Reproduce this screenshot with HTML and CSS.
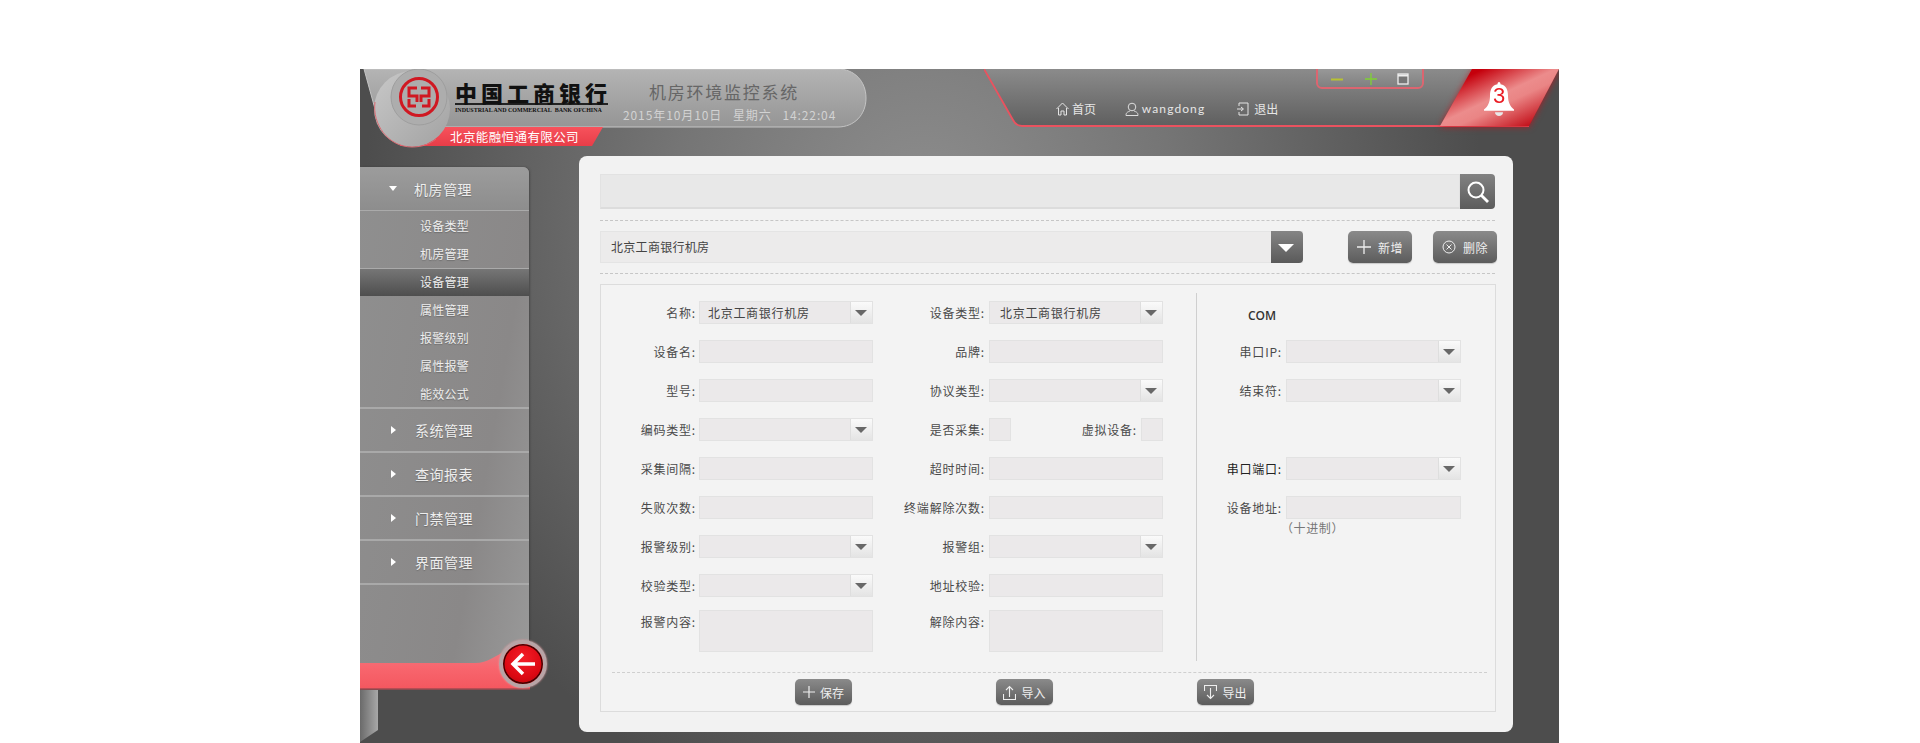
FILE: index.html
```html
<!DOCTYPE html>
<html lang="zh-CN">
<head>
<meta charset="utf-8">
<title>机房环境监控系统</title>
<link rel="stylesheet" href="styles.css">
</head>
<body>
<div class="stage">
  <header class="topbar">
    <div class="brand">
      <svg class="brand-art" width="520" height="87" viewBox="0 0 520 87">
        <defs>
          <linearGradient id="pill" x1="0" y1="0" x2="0" y2="1"><stop offset="0" stop-color="#b4b4b4"/><stop offset="1" stop-color="#959595"/></linearGradient>
          <linearGradient id="strip" x1="0" y1="0" x2="0" y2="1"><stop offset="0" stop-color="#f7525c"/><stop offset="1" stop-color="#e83d48"/></linearGradient>
          <linearGradient id="disc" x1="0" y1="0" x2="1" y2="1"><stop offset="0" stop-color="#c8c8c8"/><stop offset="1" stop-color="#a2a2a2"/></linearGradient>
        </defs>
        <path d="M4 0H478C494 0 506 12 506 29C506 46 494 58 478 58H20Z" fill="url(#pill)" stroke="#c4c4c4" stroke-width="1"/>
        <path d="M40 58H243L232 77H40Z" fill="url(#strip)"/>
        <circle cx="52" cy="40" r="38" fill="url(#disc)"/>
        <path d="M15 33C12 55 28 78 52 78C62 78 70 75 76 70" fill="none" stroke="#dc6a72" stroke-width="1"/>
        <circle cx="59" cy="28" r="28" fill="#adadad" stroke="#9e9e9e"/>
        <g fill="none" stroke="#d01822">
          <circle cx="59" cy="28" r="18.5" stroke-width="3"/>
          <path d="M57 19H49V27H57V33M49 30V37H56M61 19H69V27H61V33M69 30V37H62" stroke-width="3"/>
        </g>
      </svg>
      <div class="brand-row">
        <div class="bank">
          <div class="bank-cn">中国工商银行</div>
          <div class="bank-en">INDUSTRIAL AND COMMERCIAL&nbsp; BANK OFCHINA</div>
        </div>
        <div class="system">
          <div class="system-name">机房环境监控系统</div>
          <div class="system-date">2015年10月10日 &nbsp; 星期六 &nbsp; 14:22:04</div>
        </div>
      </div>
      <div class="company">北京能融恒通有限公司</div>
    </div>

    <nav class="topnav">
      <svg class="nav-art" width="545" height="58" viewBox="0 0 545 58">
        <defs><linearGradient id="navbg" x1="0" y1="0" x2="0" y2="1"><stop offset="0" stop-color="#8b8b8b"/><stop offset="1" stop-color="#5f5f5f"/></linearGradient></defs>
        <path d="M0 0H545V57H38C33 57 31 54 29 51Z" fill="url(#navbg)"/>
        <path d="M0 0L29 51C31 55 33 57 38 57H545" fill="none" stroke="#ea525f" stroke-width="1.8"/>
      </svg>
      <div class="winctl">
        <svg width="14" height="12" viewBox="0 0 14 12"><path d="M1 6.500H13" stroke="#b8c232" stroke-width="2"/></svg>
        <svg width="14" height="14" viewBox="0 0 14 14"><path d="M1 7H13M7 1V13" stroke="#7fd133" stroke-width="1.300"/></svg>
        <svg width="12" height="12" viewBox="0 0 12 12"><rect x="1" y="1" width="10" height="10" fill="#777" stroke="#eee" stroke-width="1.300"/><path d="M1 2.500H11" stroke="#eee" stroke-width="2"/></svg>
      </div>
      <div class="navlinks">
        <a class="navlink">
          <svg width="13" height="14" viewBox="0 0 13 14" fill="none" stroke="#e4e4e4"><path d="M.5 7L6.500 1L12.500 7M2.500 6V13H5V9H8V13H10.500V6"/></svg>首页</a>
        <a class="navlink navuser">
          <svg width="14" height="14" viewBox="0 0 14 14" fill="none" stroke="#ddd"><circle cx="7" cy="5" r="3.800"/><path d="M5 9C3 10 1 10 1 13.500H13C13 10 11 10 9 9"/></svg>wangdong</a>
        <a class="navlink navexit">
          <svg width="13" height="14" viewBox="0 0 13 14" fill="none" stroke="#e4e4e4"><path d="M3 4V1H12V13H3V10M1 7H7M5 5L7.500 7L5 9"/></svg>退出</a>
      </div>
    </nav>

    <div class="alarm">
      <div class="alarm-flag">
        <div class="bell">
          <svg width="32" height="36" viewBox="0 0 32 34" preserveAspectRatio="none"><path d="M16 1C17 1 17.500 2 17.500 3C23 4 25 8 25 14C25 20 27 24 31 27V28H1V27C5 24 7 20 7 14C7 8 9 4 14.500 3C14.500 2 15 1 16 1Z" fill="#fff"/><path d="M12 29.500H20C20 32 18 33 16 33C14 33 12 32 12 29.500Z" fill="#e8e8e8"/></svg>
          <span class="bell-num">3</span>
        </div>
      </div>
    </div>
  </header>

  <div class="body">
    <aside class="sidebar">
      <div class="side-panel">
        <div class="side-head"><i class="arrow-down"></i><span>机房管理</span></div>
        <ul class="sub">
          <li>设备类型</li>
          <li>机房管理</li>
          <li class="on">设备管理</li>
          <li>属性管理</li>
          <li>报警级别</li>
          <li>属性报警</li>
          <li>能效公式</li>
        </ul>
        <div class="side-head"><i class="arrow-right"></i><span>系统管理</span></div>
        <div class="side-head"><i class="arrow-right"></i><span>查询报表</span></div>
        <div class="side-head"><i class="arrow-right"></i><span>门禁管理</span></div>
        <div class="side-head"><i class="arrow-right"></i><span>界面管理</span></div>
      </div>
      <div class="side-foot">
        <svg class="foot-art" width="170" height="41" viewBox="0 0 170 41">
          <defs><linearGradient id="red" x1="0" y1="0" x2="0" y2="1"><stop offset="0" stop-color="#e97d84"/><stop offset=".45" stop-color="#f8666e"/><stop offset="1" stop-color="#f4575f"/></linearGradient></defs>
          <path d="M0 14H115C128 14 136 6 150 0H170V40H0Z" fill="url(#red)"/>
          <path d="M0 40H170" stroke="#a04a50" stroke-width="1.500"/>
        </svg>
        <button class="back">
          <svg width="26" height="24" viewBox="0 0 26 24" fill="none" stroke="#fff" stroke-width="3.500"><path d="M25 12H4M13 2L3 12L13 22"/></svg>
        </button>
      </div>
      <div class="side-tail"></div>
    </aside>

    <main class="content">
      <div class="search">
        <div class="search-input"></div>
        <button class="search-btn">
          <svg width="24" height="24" viewBox="0 0 24 24" fill="none" stroke="#fff" stroke-width="2"><circle cx="10" cy="10" r="7.500"/><path d="M15.500 15.500L22 22" stroke-width="2.800"/></svg>
        </button>
      </div>
      <div class="toolbar">
        <div class="room">
          <span class="room-text">北京工商银行机房</span>
          <span class="room-arrow"></span>
        </div>
        <button class="btn btn-lg btn-add">
          <svg width="14" height="14" viewBox="0 0 14 14" stroke="#eee" stroke-width="1.300"><path d="M0 7H14M7 0V14"/></svg>新增</button>
        <button class="btn btn-lg btn-del">
          <svg width="14" height="14" viewBox="0 0 14 14" fill="none" stroke="#eee"><circle cx="7" cy="7" r="6"/><path d="M4.500 4.500L9.500 9.500M9.500 4.500L4.500 9.500"/></svg>删除</button>
      </div>

      <section class="formbox">
        <div class="columns">
          <div class="col col-a">
            <label>名称:</label><div class="field select has-value">北京工商银行机房</div>
            <label>设备名:</label><div class="field"></div>
            <label>型号:</label><div class="field"></div>
            <label>编码类型:</label><div class="field select"></div>
            <label>采集间隔:</label><div class="field"></div>
            <label>失败次数:</label><div class="field"></div>
            <label>报警级别:</label><div class="field select"></div>
            <label>校验类型:</label><div class="field select"></div>
            <label class="raised">报警内容:</label><div class="field area"></div>
          </div>
          <div class="col col-b">
            <label>设备类型:</label><div class="field select has-value">北京工商银行机房</div>
            <label>品牌:</label><div class="field"></div>
            <label>协议类型:</label><div class="field select"></div>
            <label>是否采集:</label>
            <div class="checks">
              <div class="field check"></div>
              <label>虚拟设备:</label>
              <div class="field check"></div>
            </div>
            <label>超时时间:</label><div class="field"></div>
            <label>终端解除次数:</label><div class="field"></div>
            <label>报警组:</label><div class="field select"></div>
            <label>地址校验:</label><div class="field"></div>
            <label class="raised">解除内容:</label><div class="field area"></div>
          </div>
          <div class="col col-c">
            <div class="com">COM</div>
            <label>串口IP:</label><div class="field select"></div>
            <label>结束符:</label><div class="field select"></div>
            <div class="blank"></div>
            <label class="dark">串口端口:</label><div class="field select"></div>
            <label>设备地址:</label><div class="field"></div>
            <div class="note">（十进制）</div>
          </div>
        </div>
        <div class="actions">
          <button class="btn btn-sm">
            <svg width="12" height="12" viewBox="0 0 12 12" stroke="#eee" stroke-width="1.200"><path d="M0 6H12M6 0V12"/></svg>保存</button>
          <button class="btn btn-sm">
            <svg width="13" height="15" viewBox="0 0 13 15" fill="none" stroke="#eee" stroke-width="1.100"><path d="M0 14.500H13M0.500 9V14M12.500 9V14M6.500 12V1.500M3 5L6.500 1.500L10 5"/></svg>导入</button>
          <button class="btn btn-sm">
            <svg width="13" height="15" viewBox="0 0 13 15" fill="none" stroke="#eee" stroke-width="1.100"><path d="M0 .5H13M0.500 1V6M12.500 1V6M6.500 3V13.500M3 10L6.500 13.500L10 10"/></svg>导出</button>
        </div>
      </section>
    </main>
  </div>
</div>
</body>
</html>
```

FILE: styles.css
```css
* { box-sizing: border-box; }
html, body { margin: 0; padding: 0; background: #fff; height: 743px; overflow: hidden; }
body { font-family: "Noto Sans CJK SC", "Liberation Sans", sans-serif; font-size: 12px; color: #444; }
ul { list-style: none; margin: 0; padding: 0; }
button { font-family: inherit; border: 0; padding: 0; cursor: pointer; }

.stage {
  width: 1199px; height: 674px; margin: 69px 0 0 360px; position: relative; overflow: hidden;
  background:
    radial-gradient(ellipse 560px 620px at 47% 22%, #8e8e8e 0%, #757575 45%, rgba(80,80,80,0) 100%),
    #4d4d4d;
}

/* top bar */
.topbar { display: flex; height: 87px; position: relative; }
.brand { width: 520px; height: 87px; position: relative; }
.brand-art { position: absolute; left: 0; top: 0; }
.brand-row { position: relative; display: flex; height: 58px; padding: 11px 0 0 95px; }
.bank { width: 153px; }
.bank-cn { font-size: 22px; line-height: 25px; font-weight: 900; color: #111; letter-spacing: 4px; white-space: nowrap; border-bottom: 2px solid #222; height: 25px; }
.bank-en { font-family: "Liberation Serif", serif; font-weight: bold; font-size: 6px; line-height: 9px; color: #111; white-space: nowrap; margin-top: 1px; }
.system { margin-left: 15px; }
.system-name { font-size: 17px; line-height: 24px; letter-spacing: 1.750px; color: #666; padding-left: 26px; white-space: nowrap; }
.system-date { font-size: 12px; line-height: 17px; letter-spacing: .9px; color: #d2d2d2; margin-top: 2px; white-space: nowrap; }
.company { position: relative; padding-left: 90px; font-size: 12.500px; line-height: 19px; letter-spacing: .4px; color: #fff; white-space: nowrap; }

.topnav { width: 545px; height: 58px; margin-left: 104px; position: relative; flex: none; }
.nav-art { position: absolute; left: 0; top: 0; }
.winctl {
  position: absolute; left: 332px; top: -2px; width: 108px; height: 22px;
  display: flex; justify-content: space-between; align-items: center;
  padding: 2px 13px 0 12px; background: linear-gradient(#989898, #808080); border: 2px solid #dc6570; border-radius: 0 0 6px 6px;
}
.navlinks { position: relative; display: flex; align-items: center; padding: 22px 0 0 72px; height: 57px; }
.navlink { display: flex; align-items: center; gap: 3px; color: #e6e6e6; font-size: 12px; line-height: 16px; letter-spacing: -.1px; }
.navlink svg { flex: none; }
.navuser { margin-left: 29px; font-family: "Lato", sans-serif; letter-spacing: 1.100px; }
.navexit { margin-left: 31px; gap: 5px; }

.alarm { position: absolute; left: 1080px; top: 0; width: 119px; height: 57px; filter: drop-shadow(0 1px 3px rgba(190,20,30,.8)); }
.alarm-flag {
  width: 100%; height: 100%;
  clip-path: polygon(32px 0, 119px 0, 89px 57px, 0 57px);
  background: linear-gradient(155deg, #c5000c 18%, #ec8c8c 48%, #ea8585 58%, #c30f19 88%);
  display: flex; justify-content: center;
}
.bell { position: relative; width: 32px; height: 36px; margin: 12px 0 0 -1px; }
.bell-num { position: absolute; left: 0; right: 0; top: 3px; text-align: center; font-family: "Liberation Sans", sans-serif; font-size: 22px; line-height: 24px; color: #ea1c24; }

/* body */
.body { display: flex; height: 587px; }
.sidebar { width: 169px; margin-top: 11px; position: relative; flex: none; }
.side-panel {
  height: 496px; border-radius: 0 6px 0 0;
  background: linear-gradient(100deg, #8f8f8f 0%, #8a8888 70%, #999 100%);
  box-shadow: 1px 0 2px rgba(50,50,50,.5);
}
.side-head {
  height: 44px; display: flex; align-items: center; padding-left: 29px;
  color: #eee; font-size: 14px; letter-spacing: .5px;
  border-bottom: 2px solid #a9a9a9;
  text-shadow: 0 1px 1px rgba(60,60,60,.4);
}
.side-head:first-child { border-radius: 0 6px 0 0; background: linear-gradient(#9c9c9c, #8d8d8d); border-bottom: 1px solid #aaa; }
.side-head span { margin-left: 17px; }
.arrow-down, .arrow-right { display: block; width: 0; height: 0; flex: none; }
.arrow-down { border: 4.500px solid transparent; border-top: 5px solid #fff; border-bottom: 0; }
.arrow-right { border: 4.500px solid transparent; border-left: 5px solid #fff; border-right: 0; margin-left: 2px; margin-right: 2px; }
.sub { height: 198px; padding-top: 1px; border-bottom: 2px solid #a9a9a9; }
.sub li { height: 28px; line-height: 28px; text-align: center; color: #eee; font-size: 12px; letter-spacing: .3px; text-shadow: 0 1px 1px rgba(60,60,60,.4); }
.sub li.on { background: linear-gradient(#767676, #4e4e4e); border-top: 1px solid #aaa; line-height: 26px; }

.side-foot { height: 27px; position: relative; }
.foot-art { position: absolute; left: 0; top: -14px; }
.back {
  position: absolute; left: 139px; top: -23px; width: 48px; height: 48px; border-radius: 50%;
  background: radial-gradient(circle at 50% 35%, #f41e28 0%, #dc0812 60%, #a8040c 100%);
  border: 4px solid #b8a4a6; box-shadow: inset 0 0 0 1.500px #400, 0 0 2px #f2a0a4;
  display: flex; align-items: center; justify-content: center;
}
.side-tail { width: 18px; height: 53px; background: linear-gradient(90deg, #6a6a6a, #a8a8a8); clip-path: polygon(0 0, 100% 0, 100% 40px, 0 52px); }

/* content */
.content {
  width: 934px; height: 576px; margin-left: 50px; flex: none; align-self: flex-start;
  padding: 18px 17px 20px 21px; background: #f2f2f2; border-radius: 8px;
}
.search { display: flex; width: 895px; height: 35px; padding-bottom: 0; }
.search-input { flex: 1; background: #e8e8e8; border: 1px solid #e2e2e2; border-bottom: 2px solid #dcdcdc; }
.search-btn { width: 35px; background: linear-gradient(#828282, #5c5c5c); border-radius: 0 4px 4px 0; display: flex; align-items: center; justify-content: center; }

.toolbar { display: flex; align-items: center; height: 54px; margin-top: 11px; padding: 11px 0; border-top: 1px dashed #c6c6c6; border-bottom: 1px dashed #c6c6c6; width: 895px; }
.room { display: flex; flex: none; width: 703px; height: 32px; background: #ecebeb; border: 1px solid #e4e4e4; border-right: 0; }
.room-text { flex: 1; padding-left: 10px; line-height: 30px; font-size: 12px; color: #444; letter-spacing: .3px; }
.room-arrow {
  width: 32px; margin: -1px 0; position: relative; border-radius: 0 4px 4px 0; background: linear-gradient(#858585, #5a5a5a);
}
.room-arrow::after { content: ""; position: absolute; left: 7px; top: 13px; border: 8.500px solid transparent; border-top: 8px solid #fff; border-bottom: 0; }

.btn { display: flex; flex: none; align-items: center; justify-content: center; color: #eee; font-size: 12px; background: linear-gradient(#8a8a8a, #5c5c5c); border-radius: 5px; box-shadow: 0 1px 1px #c8c8c8; }
.btn-lg { width: 64px; height: 32px; gap: 7px; letter-spacing: .4px; }
.btn-add { margin-left: 45px; }
.btn-del { margin-left: 21px; }
.btn-sm { width: 57px; height: 26px; gap: 5px; }

.formbox { width: 896px; height: 428px; margin-top: 10px; border: 1px solid #dcdcdc; background: #f3f3f3; display: flex; flex-direction: column; }
.columns { display: flex; height: 376px; position: relative; }
.col { display: grid; align-content: start; padding-top: 16px; grid-auto-rows: 23px; row-gap: 16px; }
.col label { text-align: right; line-height: 23px; font-size: 12px; letter-spacing: .8px; white-space: nowrap; color: #4a4a4a; }
.col label.dark { color: #222; }
.col label.raised { margin-top: -3px; }
.col-a { width: 272px; grid-template-columns: 98px 174px; }
.col-a > label { padding-right: 3px; }
.col-b { width: 290px; grid-template-columns: 116px 174px; }
.col-b > label { padding-right: 4px; }
.col-b .has-value { padding-left: 10px; }
.col-c { width: 295px; margin: 8px 0 0 33px; padding-top: 8px; border-left: 1px solid #cfcfcf; grid-template-columns: 89px 175px; height: 368px; row-gap: 16px; }
.col-c > label { padding-right: 4px; }
.com { grid-column: 1 / -1; padding: 3px 0 0 51px; font-family: "Open Sans", sans-serif; font-size: 12px; font-weight: 600; line-height: 23px; color: #333; }
.blank { grid-column: 1 / -1; }
.note { grid-column: 2; margin-top: -16px; line-height: 18px; color: #777; letter-spacing: .6px; margin-left: -5px; }

.field { background: #ebe9ea; border: 1px solid #e2e2e2; height: 23px; position: relative; }
.select { padding-right: 22px; }
.select::after { content: ""; position: absolute; right: 0; top: 0; bottom: 0; width: 21px; background: linear-gradient(#fafafa, #e4e4e4); border-left: 1px solid #dedede; }
.select::before { content: ""; position: absolute; z-index: 1; right: 5px; top: 8px; border: 6px solid transparent; border-top: 6px solid #686868; border-bottom: 0; }
.has-value { padding-left: 8px; line-height: 21px; font-size: 12px; letter-spacing: .7px; color: #444; white-space: nowrap; }
.area { height: 42px; margin-top: -3px; }
.checks { display: flex; align-items: center; justify-content: space-between; }
.check { width: 22px; flex: none; }
.checks label { margin-left: auto; padding-right: 4px; }

.actions { margin: 11px 8px 0 11px; height: 33px; border-top: 1px dashed #cfcfcf; display: flex; gap: 144px; padding: 6px 0 0 183px; }
```
